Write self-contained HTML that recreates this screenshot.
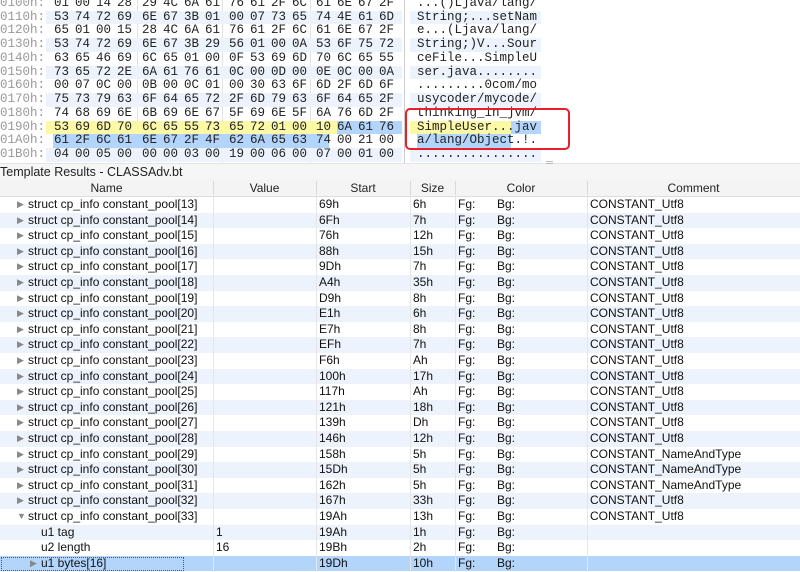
<!DOCTYPE html>
<html><head><meta charset="utf-8"><style>
*{margin:0;padding:0;box-sizing:border-box}
body{width:800px;height:572px;overflow:hidden;background:#fff;position:relative;font-family:"Liberation Sans",sans-serif}
.hr{position:absolute;left:0;width:800px;height:13.73px;font-family:"Liberation Mono",monospace;font-size:12.5px;line-height:13.73px;color:#222}
.off{position:absolute;left:0;color:#999}
.g{position:absolute;word-spacing:-1.5px;white-space:pre}
.asc{position:absolute;left:417px;white-space:pre}
.bg{position:absolute;top:0;height:13.73px}
.vl{position:absolute;top:0;height:163px;width:1px;background:#e2e2e2}
.tr{position:absolute;left:0;width:800px;height:15.6px;font-size:12px;line-height:15.6px;color:#111}
.tr span{position:absolute;white-space:pre}
.tri{font-size:9px;color:#888}
.hd{position:absolute;top:179px;left:0;width:800px;height:18px;background:#f4f4f4;border-bottom:1px solid #ddd;font-size:12px;line-height:18px;color:#222}
.hd span{position:absolute;text-align:center}
.hd i{position:absolute;top:2px;width:1px;height:14px;background:#d8d8d8}
</style></head><body>
<div class="vl" style="left:137px"></div><div class="vl" style="left:222px"></div><div class="vl" style="left:310px"></div><div class="vl" style="left:404px;background:#ccc"></div>

<div class="hr" style="top:-3px"><span class="off">0100h:</span><span class="g" style="left:54px">01 00 14 28</span><span class="g" style="left:142px">29 4C 6A 61</span><span class="g" style="left:229px">76 61 2F 6C</span><span class="g" style="left:316px">61 6E 67 2F</span><span class="asc">...()Ljava/lang/</span></div>
<div class="hr" style="top:10.73px"><div class="bg" style="left:46px;width:356px;background:#edf3fc"></div><div class="bg" style="left:410px;width:131px;background:#edf3fc"></div><span class="off">0110h:</span><span class="g" style="left:54px">53 74 72 69</span><span class="g" style="left:142px">6E 67 3B 01</span><span class="g" style="left:229px">00 07 73 65</span><span class="g" style="left:316px">74 4E 61 6D</span><span class="asc">String;...setNam</span></div>
<div class="hr" style="top:24.46px"><span class="off">0120h:</span><span class="g" style="left:54px">65 01 00 15</span><span class="g" style="left:142px">28 4C 6A 61</span><span class="g" style="left:229px">76 61 2F 6C</span><span class="g" style="left:316px">61 6E 67 2F</span><span class="asc">e...(Ljava/lang/</span></div>
<div class="hr" style="top:38.19px"><div class="bg" style="left:46px;width:356px;background:#edf3fc"></div><div class="bg" style="left:410px;width:131px;background:#edf3fc"></div><span class="off">0130h:</span><span class="g" style="left:54px">53 74 72 69</span><span class="g" style="left:142px">6E 67 3B 29</span><span class="g" style="left:229px">56 01 00 0A</span><span class="g" style="left:316px">53 6F 75 72</span><span class="asc">String;)V...Sour</span></div>
<div class="hr" style="top:51.92px"><span class="off">0140h:</span><span class="g" style="left:54px">63 65 46 69</span><span class="g" style="left:142px">6C 65 01 00</span><span class="g" style="left:229px">0F 53 69 6D</span><span class="g" style="left:316px">70 6C 65 55</span><span class="asc">ceFile...SimpleU</span></div>
<div class="hr" style="top:65.65px"><div class="bg" style="left:46px;width:356px;background:#edf3fc"></div><div class="bg" style="left:410px;width:131px;background:#edf3fc"></div><span class="off">0150h:</span><span class="g" style="left:54px">73 65 72 2E</span><span class="g" style="left:142px">6A 61 76 61</span><span class="g" style="left:229px">0C 00 0D 00</span><span class="g" style="left:316px">0E 0C 00 0A</span><span class="asc">ser.java........</span></div>
<div class="hr" style="top:79.38px"><span class="off">0160h:</span><span class="g" style="left:54px">00 07 0C 00</span><span class="g" style="left:142px">0B 00 0C 01</span><span class="g" style="left:229px">00 30 63 6F</span><span class="g" style="left:316px">6D 2F 6D 6F</span><span class="asc">.........0com/mo</span></div>
<div class="hr" style="top:93.11px"><div class="bg" style="left:46px;width:356px;background:#edf3fc"></div><div class="bg" style="left:410px;width:131px;background:#edf3fc"></div><span class="off">0170h:</span><span class="g" style="left:54px">75 73 79 63</span><span class="g" style="left:142px">6F 64 65 72</span><span class="g" style="left:229px">2F 6D 79 63</span><span class="g" style="left:316px">6F 64 65 2F</span><span class="asc">usycoder/mycode/</span></div>
<div class="hr" style="top:106.84px"><span class="off">0180h:</span><span class="g" style="left:54px">74 68 69 6E</span><span class="g" style="left:142px">6B 69 6E 67</span><span class="g" style="left:229px">5F 69 6E 5F</span><span class="g" style="left:316px">6A 76 6D 2F</span><span class="asc">thinking_in_jvm/</span></div>
<div class="hr" style="top:120.57px"><div class="bg" style="left:46px;width:291px;background:#fbf8a6"></div><div class="bg" style="left:337px;width:65px;background:#b3d4fb"></div><div class="bg" style="left:410px;width:101px;background:#fbf8a6"></div><div class="bg" style="left:511px;width:30px;background:#b3d4fb"></div><span class="off">0190h:</span><span class="g" style="left:54px">53 69 6D 70</span><span class="g" style="left:142px">6C 65 55 73</span><span class="g" style="left:229px">65 72 01 00</span><span class="g" style="left:316px">10 6A 61 76</span><span class="asc">SimpleUser...jav</span></div>
<div class="hr" style="top:134.3px"><div class="bg" style="left:53px;width:276px;background:#b3d4fb"></div><div class="bg" style="left:417px;width:94px;background:#b3d4fb"></div><span class="off">01A0h:</span><span class="g" style="left:54px">61 2F 6C 61</span><span class="g" style="left:142px">6E 67 2F 4F</span><span class="g" style="left:229px">62 6A 65 63</span><span class="g" style="left:316px">74 00 21 00</span><span class="asc">a/lang/Object.!.</span></div>
<div class="hr" style="top:148.03px"><div class="bg" style="left:46px;width:356px;background:#edf3fc"></div><div class="bg" style="left:410px;width:131px;background:#edf3fc"></div><span class="off">01B0h:</span><span class="g" style="left:54px">04 00 05 00</span><span class="g" style="left:142px">00 00 03 00</span><span class="g" style="left:229px">19 00 06 00</span><span class="g" style="left:316px">07 00 01 00</span><span class="asc">................</span></div>

<div style="position:absolute;left:405px;top:108px;width:165px;height:42px;border:2px solid #e8202a;border-radius:5px"></div>

<div style="position:absolute;left:0;top:163px;width:800px;height:16px;background:#f6f6f6;border-top:1px solid #e4e4e4"></div>
<div style="position:absolute;left:546px;top:161px;width:7px;height:3px;border-top:1px solid #bbb;border-bottom:1px solid #bbb"></div>
<div style="position:absolute;left:0;top:164px;font-size:12.5px;line-height:16px;color:#222">Template Results - CLASSAdv.bt</div>

<div class="hd"><span style="left:0;width:213px">Name</span><i style="left:213px"></i><span style="left:213px;width:103px">Value</span><i style="left:316px"></i><span style="left:316px;width:94px">Start</span><i style="left:410px"></i><span style="left:410px;width:45px">Size</span><i style="left:455px"></i><span style="left:455px;width:132px">Color</span><i style="left:587px"></i><span style="left:587px;width:213px">Comment</span></div>

<div style="position:absolute;top:197px;left:0;width:800px">
<div class="tr" style="top:0"><span class="tri" style="left:17px">▶</span><span style="left:28px">struct cp_info constant_pool[13]</span><span style="left:319px">69h</span><span style="left:413px">6h</span><span style="left:458px">Fg:</span><span style="left:497px">Bg:</span><span style="left:590px">CONSTANT_Utf8</span></div>
<div class="tr" style="top:15.6px;background:#edf3fc"><span class="tri" style="left:17px">▶</span><span style="left:28px">struct cp_info constant_pool[14]</span><span style="left:319px">6Fh</span><span style="left:413px">7h</span><span style="left:458px">Fg:</span><span style="left:497px">Bg:</span><span style="left:590px">CONSTANT_Utf8</span></div>
<div class="tr" style="top:31.2px"><span class="tri" style="left:17px">▶</span><span style="left:28px">struct cp_info constant_pool[15]</span><span style="left:319px">76h</span><span style="left:413px">12h</span><span style="left:458px">Fg:</span><span style="left:497px">Bg:</span><span style="left:590px">CONSTANT_Utf8</span></div>
<div class="tr" style="top:46.8px;background:#edf3fc"><span class="tri" style="left:17px">▶</span><span style="left:28px">struct cp_info constant_pool[16]</span><span style="left:319px">88h</span><span style="left:413px">15h</span><span style="left:458px">Fg:</span><span style="left:497px">Bg:</span><span style="left:590px">CONSTANT_Utf8</span></div>
<div class="tr" style="top:62.4px"><span class="tri" style="left:17px">▶</span><span style="left:28px">struct cp_info constant_pool[17]</span><span style="left:319px">9Dh</span><span style="left:413px">7h</span><span style="left:458px">Fg:</span><span style="left:497px">Bg:</span><span style="left:590px">CONSTANT_Utf8</span></div>
<div class="tr" style="top:78px;background:#edf3fc"><span class="tri" style="left:17px">▶</span><span style="left:28px">struct cp_info constant_pool[18]</span><span style="left:319px">A4h</span><span style="left:413px">35h</span><span style="left:458px">Fg:</span><span style="left:497px">Bg:</span><span style="left:590px">CONSTANT_Utf8</span></div>
<div class="tr" style="top:93.6px"><span class="tri" style="left:17px">▶</span><span style="left:28px">struct cp_info constant_pool[19]</span><span style="left:319px">D9h</span><span style="left:413px">8h</span><span style="left:458px">Fg:</span><span style="left:497px">Bg:</span><span style="left:590px">CONSTANT_Utf8</span></div>
<div class="tr" style="top:109.2px;background:#edf3fc"><span class="tri" style="left:17px">▶</span><span style="left:28px">struct cp_info constant_pool[20]</span><span style="left:319px">E1h</span><span style="left:413px">6h</span><span style="left:458px">Fg:</span><span style="left:497px">Bg:</span><span style="left:590px">CONSTANT_Utf8</span></div>
<div class="tr" style="top:124.8px"><span class="tri" style="left:17px">▶</span><span style="left:28px">struct cp_info constant_pool[21]</span><span style="left:319px">E7h</span><span style="left:413px">8h</span><span style="left:458px">Fg:</span><span style="left:497px">Bg:</span><span style="left:590px">CONSTANT_Utf8</span></div>
<div class="tr" style="top:140.4px;background:#edf3fc"><span class="tri" style="left:17px">▶</span><span style="left:28px">struct cp_info constant_pool[22]</span><span style="left:319px">EFh</span><span style="left:413px">7h</span><span style="left:458px">Fg:</span><span style="left:497px">Bg:</span><span style="left:590px">CONSTANT_Utf8</span></div>
<div class="tr" style="top:156px"><span class="tri" style="left:17px">▶</span><span style="left:28px">struct cp_info constant_pool[23]</span><span style="left:319px">F6h</span><span style="left:413px">Ah</span><span style="left:458px">Fg:</span><span style="left:497px">Bg:</span><span style="left:590px">CONSTANT_Utf8</span></div>
<div class="tr" style="top:171.6px;background:#edf3fc"><span class="tri" style="left:17px">▶</span><span style="left:28px">struct cp_info constant_pool[24]</span><span style="left:319px">100h</span><span style="left:413px">17h</span><span style="left:458px">Fg:</span><span style="left:497px">Bg:</span><span style="left:590px">CONSTANT_Utf8</span></div>
<div class="tr" style="top:187.2px"><span class="tri" style="left:17px">▶</span><span style="left:28px">struct cp_info constant_pool[25]</span><span style="left:319px">117h</span><span style="left:413px">Ah</span><span style="left:458px">Fg:</span><span style="left:497px">Bg:</span><span style="left:590px">CONSTANT_Utf8</span></div>
<div class="tr" style="top:202.8px;background:#edf3fc"><span class="tri" style="left:17px">▶</span><span style="left:28px">struct cp_info constant_pool[26]</span><span style="left:319px">121h</span><span style="left:413px">18h</span><span style="left:458px">Fg:</span><span style="left:497px">Bg:</span><span style="left:590px">CONSTANT_Utf8</span></div>
<div class="tr" style="top:218.4px"><span class="tri" style="left:17px">▶</span><span style="left:28px">struct cp_info constant_pool[27]</span><span style="left:319px">139h</span><span style="left:413px">Dh</span><span style="left:458px">Fg:</span><span style="left:497px">Bg:</span><span style="left:590px">CONSTANT_Utf8</span></div>
<div class="tr" style="top:234px;background:#edf3fc"><span class="tri" style="left:17px">▶</span><span style="left:28px">struct cp_info constant_pool[28]</span><span style="left:319px">146h</span><span style="left:413px">12h</span><span style="left:458px">Fg:</span><span style="left:497px">Bg:</span><span style="left:590px">CONSTANT_Utf8</span></div>
<div class="tr" style="top:249.6px"><span class="tri" style="left:17px">▶</span><span style="left:28px">struct cp_info constant_pool[29]</span><span style="left:319px">158h</span><span style="left:413px">5h</span><span style="left:458px">Fg:</span><span style="left:497px">Bg:</span><span style="left:590px">CONSTANT_NameAndType</span></div>
<div class="tr" style="top:265.2px;background:#edf3fc"><span class="tri" style="left:17px">▶</span><span style="left:28px">struct cp_info constant_pool[30]</span><span style="left:319px">15Dh</span><span style="left:413px">5h</span><span style="left:458px">Fg:</span><span style="left:497px">Bg:</span><span style="left:590px">CONSTANT_NameAndType</span></div>
<div class="tr" style="top:280.8px"><span class="tri" style="left:17px">▶</span><span style="left:28px">struct cp_info constant_pool[31]</span><span style="left:319px">162h</span><span style="left:413px">5h</span><span style="left:458px">Fg:</span><span style="left:497px">Bg:</span><span style="left:590px">CONSTANT_NameAndType</span></div>
<div class="tr" style="top:296.4px;background:#edf3fc"><span class="tri" style="left:17px">▶</span><span style="left:28px">struct cp_info constant_pool[32]</span><span style="left:319px">167h</span><span style="left:413px">33h</span><span style="left:458px">Fg:</span><span style="left:497px">Bg:</span><span style="left:590px">CONSTANT_Utf8</span></div>
<div class="tr" style="top:312px"><span class="tri" style="left:17px">▼</span><span style="left:28px">struct cp_info constant_pool[33]</span><span style="left:319px">19Ah</span><span style="left:413px">13h</span><span style="left:458px">Fg:</span><span style="left:497px">Bg:</span><span style="left:590px">CONSTANT_Utf8</span></div>
<div class="tr" style="top:327.6px;background:#edf3fc"><span style="left:41px">u1 tag</span><span style="left:216px">1</span><span style="left:319px">19Ah</span><span style="left:413px">1h</span><span style="left:458px">Fg:</span><span style="left:497px">Bg:</span></div>
<div class="tr" style="top:343.2px"><span style="left:41px">u2 length</span><span style="left:216px">16</span><span style="left:319px">19Bh</span><span style="left:413px">2h</span><span style="left:458px">Fg:</span><span style="left:497px">Bg:</span></div>
<div class="tr" style="top:358.8px;background:#b3d4fb"><div style="position:absolute;left:1px;top:1px;width:183px;height:14px;border:1px dotted #555"></div><span class="tri" style="left:30px">▶</span><span style="left:41px">u1 bytes[16]</span><span style="left:319px">19Dh</span><span style="left:413px">10h</span><span style="left:458px">Fg:</span><span style="left:497px">Bg:</span></div>
</div>
<div style="position:absolute;top:197px;left:213px;width:1px;height:375px;background:#e6e6e6"></div>
<div style="position:absolute;top:197px;left:316px;width:1px;height:375px;background:#e6e6e6"></div>
<div style="position:absolute;top:197px;left:410px;width:1px;height:375px;background:#e6e6e6"></div>
<div style="position:absolute;top:197px;left:455px;width:1px;height:375px;background:#e6e6e6"></div>
<div style="position:absolute;top:197px;left:587px;width:1px;height:375px;background:#e6e6e6"></div>
</body></html>
